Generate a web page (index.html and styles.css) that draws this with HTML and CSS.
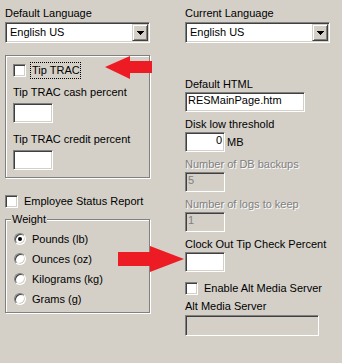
FILE: index.html
```html
<!DOCTYPE html>
<html>
<head>
<meta charset="utf-8">
<title>Options</title>
<link rel="stylesheet" href="styles.css">
</head>
<body>
<div class="dlg">
  <div class="col left">
    <div class="lbl first">Default Language</div>
    <div class="combo">
      <span class="combo-text">English US</span>
      <span class="combo-btn"><svg class="tri" width="7" height="4" viewBox="0 0 7 4" shape-rendering="crispEdges"><rect x="0" y="0" width="7" height="1"/><rect x="1" y="1" width="5" height="1"/><rect x="2" y="2" width="3" height="1"/><rect x="3" y="3" width="1" height="1"/></svg></span>
    </div>

    <div class="group tip">
      <div class="chkrow"><span class="chk"></span><span class="focus">Tip TRAC</span></div>
      <div class="lbl cash">Tip TRAC cash percent</div>
      <div class="edit small"></div>
      <div class="lbl credit">Tip TRAC credit percent</div>
      <div class="edit small"></div>
    </div>

    <div class="chkrow emp"><span class="chk"></span><span class="chklbl">Employee Status Report</span></div>

    <div class="group weight">
      <div class="legend">Weight</div>
      <div class="radrow r1"><span class="rad"><span class="dot"></span></span><span class="radlbl">Pounds (lb)</span></div>
      <div class="radrow"><span class="rad"></span><span class="radlbl">Ounces (oz)</span></div>
      <div class="radrow"><span class="rad"></span><span class="radlbl">Kilograms (kg)</span></div>
      <div class="radrow"><span class="rad"></span><span class="radlbl">Grams (g)</span></div>
    </div>
  </div>

  <div class="col right">
    <div class="lbl first">Current Language</div>
    <div class="combo">
      <span class="combo-text">English US</span>
      <span class="combo-btn"><svg class="tri" width="7" height="4" viewBox="0 0 7 4" shape-rendering="crispEdges"><rect x="0" y="0" width="7" height="1"/><rect x="1" y="1" width="5" height="1"/><rect x="2" y="2" width="3" height="1"/><rect x="3" y="3" width="1" height="1"/></svg></span>
    </div>

    <div class="lbl html">Default HTML</div>
    <div class="edit wide">RESMainPage.htm</div>

    <div class="lbl field">Disk low threshold</div>
    <div class="editrow"><div class="edit small num">0</div><span class="unit">MB</span></div>

    <div class="lbl field disabled">Number of DB backups</div>
    <div class="edit small off">5</div>

    <div class="lbl field disabled">Number of logs to keep</div>
    <div class="edit small off">1</div>

    <div class="lbl field">Clock Out Tip Check Percent</div>
    <div class="edit small"></div>

    <div class="chkrow alt"><span class="chk"></span><span class="chklbl">Enable Alt Media Server</span></div>

    <div class="lbl altlbl">Alt Media Server</div>
    <div class="edit altedit off"></div>
  </div>

  <svg class="arrows" width="342" height="363" viewBox="0 0 342 363">
    <polygon points="105,67 130,56 130,61 152,61 152,73 130,73 130,79" fill="#ED1C24"/>
    <polygon points="118,252 150,252 150,246 184,259 150,272 150,266 118,266" fill="#ED1C24"/>
  </svg>
</div>
</body>
</html>
```

FILE: styles.css
```css
html, body {
  margin: 0;
  padding: 0;
}

body {
  background: #d4d0c8;
  font-family: "Liberation Sans", Arial, sans-serif;
  font-size: 11px;
  line-height: 13px;
  color: #000;
  width: 342px;
  height: 363px;
  overflow: hidden;
}

.dlg {
  position: relative;
  display: flex;
  gap: 34px;
  padding-left: 5px;
  height: 363px;
}

.col {
  display: flex;
  flex-direction: column;
  align-items: flex-start;
}

.left { width: 146px; }
.right { width: 145px; }

.lbl {
  height: 13px;
  white-space: nowrap;
}

.first { margin-top: 7px; }

.disabled {
  color: #808080;
  text-shadow: 1px 1px 0 #fff;
}

/* sunken 3D frame shared by edits, combos and checkboxes */
.combo, .edit, .chk, .rad {
  box-sizing: border-box;
  border: 1px solid;
  border-color: #808080 #fff #fff #808080;
  box-shadow: inset 1px 1px 0 #404040, inset -1px -1px 0 #d4d0c8;
  background: #fff;
}

.combo {
  margin-top: 2px;
  width: 145px;
  height: 21px;
  padding: 1px;
  display: flex;
}

.combo-text {
  flex: 1;
  line-height: 17px;
  padding-left: 3px;
}

.combo-btn {
  box-sizing: border-box;
  width: 16px;
  height: 17px;
  border: 1px solid;
  border-color: #d4d0c8 #404040 #404040 #d4d0c8;
  box-shadow: inset 1px 1px 0 #fff, inset -1px -1px 0 #808080;
  background: #d4d0c8;
  display: flex;
  align-items: center;
  justify-content: center;
}

.tri { display: block; fill: #000; margin-top: 1px; }

/* group boxes */
.group {
  box-sizing: border-box;
  width: 145px;
  border: 1px solid #808080;
  box-shadow: inset 1px 1px 0 #fff, 1px 1px 0 #fff;
  display: flex;
  flex-direction: column;
  align-items: flex-start;
}

.tip {
  margin-top: 12px;
  padding: 8px 0 7px 7px;
}

.chkrow {
  display: flex;
  align-items: center;
  height: 13px;
  white-space: nowrap;
}

.chk {
  width: 13px;
  height: 13px;
  flex: none;
}

.focus {
  margin-left: 4px;
  height: 17px;
  box-sizing: border-box;
  border: 1px dotted #000;
  line-height: 15px;
  padding: 0 0 0 1px;
}

.chklbl { margin-left: 6px; }

.cash { margin-top: 9px; }
.credit { margin-top: 10px; }

.edit {
  height: 20px;
  padding: 1px 2px 0 2px;
  line-height: 13px;
  white-space: nowrap;
  overflow: hidden;
}

.small { width: 40px; }
.wide { width: 120px; }

.tip .edit { margin-top: 4px; }

.edit.off {
  background: #d4d0c8;
  color: #808080;
}

.num { text-align: right; }

.emp { margin-top: 17px; }

/* weight group */
.weight {
  margin-top: 11px;
  padding: 0 0 7px 8px;
}

.legend {
  margin: -7px 0 0 -3px;
  padding: 0 1px;
  background: #d4d0c8;
  height: 13px;
}

.radrow {
  display: flex;
  align-items: center;
  height: 12px;
  margin-top: 8px;
  white-space: nowrap;
}

.radrow.r1 { margin-top: 7px; }

.rad {
  width: 12px;
  height: 12px;
  border-radius: 50%;
  flex: none;
  display: flex;
  align-items: center;
  justify-content: center;
}

.dot {
  width: 4px;
  height: 4px;
  border-radius: 50%;
  background: #000;
}

.radlbl { margin-left: 6px; }

/* right column */
.html { margin-top: 35px; }
.field { margin-top: 6px; }

.right > .edit,
.editrow { margin-top: 1px; }

.editrow {
  display: flex;
  align-items: center;
}

.unit { margin-left: 2px; }

.alt { margin-top: 10px; }
.altlbl { margin-top: 5px; }
.right > .altedit {
  margin-top: 2px;
  width: 134px;
  height: 21px;
}

.arrows {
  position: absolute;
  left: 0;
  top: 0;
  pointer-events: none;
}
```
